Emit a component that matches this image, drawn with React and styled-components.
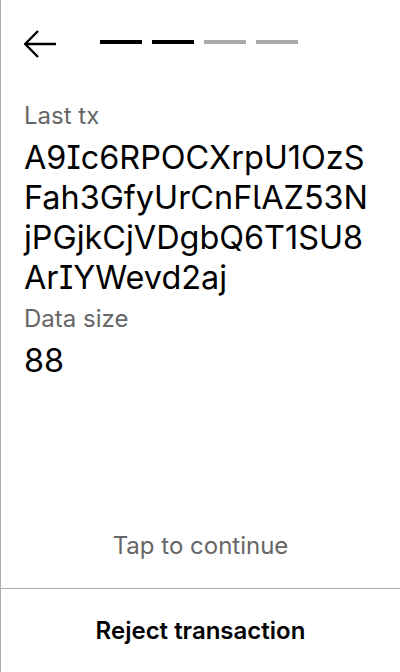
import React from 'react';
import styled, { createGlobalStyle } from 'styled-components';

const GlobalStyle = createGlobalStyle`
  html, body {
    margin: 0;
    padding: 0;
    background: #ffffff;
  }
  body {
    font-family: Inter, "Noto Sans", sans-serif;
    font-feature-settings: "cv05", "cv08";
    color: #000;
  }
  * {
    box-sizing: border-box;
  }
`;

const Screen = styled.div`
  height: 672px;
  display: flex;
  flex-direction: column;
  border-left: 1px solid #aaaaaa;
  background: #fff;
`;

const Header = styled.div`
  display: flex;
  align-items: center;
  gap: 44px;
  padding: 30px 24px 0 23px;
`;

const BackButton = styled.button`
  display: flex;
  padding: 0;
  border: none;
  background: none;
  cursor: pointer;
  color: #000;
`;

const Steps = styled.div`
  display: flex;
  gap: 10px;
  margin-top: -4px;
`;

const Step = styled.div`
  width: 42px;
  height: 4px;
  background: ${props => (props.done ? '#000000' : '#aaaaaa')};
`;

const Content = styled.div`
  padding: 43px 30px 0 23px;
  display: flex;
  flex-direction: column;
`;

const Label = styled.div`
  font-size: 24px;
  line-height: 30px;
  color: #666666;
  margin-bottom: 7px;
`;

const Value = styled.div`
  font-size: 32.4px;
  line-height: 40px;
  color: #000;
  word-break: break-all;
  margin-bottom: 6px;
`;

const Spacer = styled.div`
  flex: 1;
`;

const Hint = styled.div`
  text-align: center;
  font-size: 24px;
  line-height: 30px;
  color: #666666;
  padding-bottom: 27px;
`;

const Footer = styled.div`
  border-top: 1px solid #aaaaaa;
  height: 84px;
  display: flex;
  align-items: center;
  justify-content: center;
`;

const RejectButton = styled.button`
  border: none;
  background: none;
  font-family: inherit;
  font-feature-settings: inherit;
  font-size: 24px;
  font-weight: 600;
  color: #000;
  cursor: pointer;
  padding: 0;
`;

const BackArrow = () => (
  <svg width="32" height="28" viewBox="0 0 32 28" fill="none">
    <path
      d="M1.2 14 H32 M14 1 L1.2 14 L14 27"
      stroke="currentColor"
      strokeWidth="2.4"
    />
  </svg>
);

const fields = [
  { label: 'Last tx', value: 'A9Ic6RPOCXrpU1OzSFah3GfyUrCnFlAZ53NjPGjkCjVDgbQ6T1SU8ArIYWevd2aj' },
  { label: 'Data size', value: '88' },
];

const steps = [true, true, false, false];

export default function App() {
  return (
    <>
      <GlobalStyle />
      <Screen>
        <Header>
          <BackButton aria-label="Back">
            <BackArrow />
          </BackButton>
          <Steps>
            {steps.map((done, i) => (
              <Step key={i} done={done} />
            ))}
          </Steps>
        </Header>
        <Content>
          {fields.map((f) => (
            <React.Fragment key={f.label}>
              <Label>{f.label}</Label>
              <Value>{f.value}</Value>
            </React.Fragment>
          ))}
        </Content>
        <Spacer />
        <Hint>Tap to continue</Hint>
        <Footer>
          <RejectButton>Reject transaction</RejectButton>
        </Footer>
      </Screen>
    </>
  );
}
